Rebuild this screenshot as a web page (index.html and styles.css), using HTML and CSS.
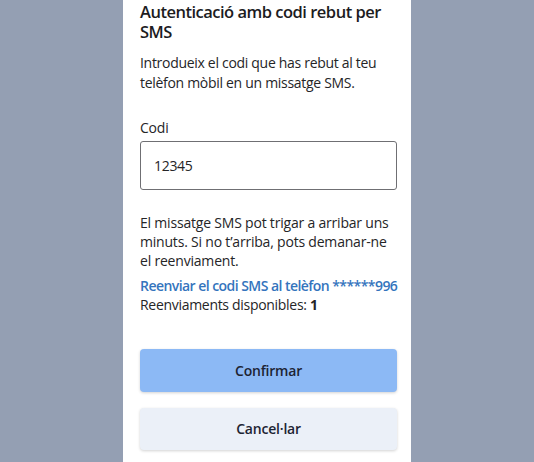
FILE: index.html
```html
<!DOCTYPE html>
<html lang="en">
<head>
<meta charset="utf-8">
<link rel="stylesheet" href="styles.css">
</head>
<body>
<div class="card">
  <h1 class="title">Autenticació amb codi rebut per SMS</h1>
  <p class="intro">Introdueix el codi que has rebut al teu telèfon mòbil en un missatge SMS.</p>
  <label class="label" for="codi">Codi</label>
  <div class="input" id="codi">12345</div>
  <p class="info">El missatge SMS pot trigar a arribar uns minuts. Si no t’arriba, pots demanar-ne el reenviament.</p>
  <a class="link">Reenviar el codi SMS al telèfon ******996</a>
  <p class="count">Reenviaments disponibles: <b>1</b></p>
  <div class="buttons">
    <div class="btn primary">Confirmar</div>
    <div class="btn secondary">Cancel·lar</div>
  </div>
</div>
</body>
</html>
```
FILE: styles.css
```css
html, body {
  margin: 0;
  padding: 0;
  height: 100%;
  overflow: hidden;
}
body {
  background: #949fb3;
  font-family: "Open Sans", "DejaVu Sans", sans-serif;
  color: #1d1d1f;
  font-variant-ligatures: no-common-ligatures;
}
.card {
  box-sizing: border-box;
  width: 288px;
  height: 462px;
  margin-left: 123px;
  background: #ffffff;
  padding: 2px 14px 0 17px;
  display: flex;
  flex-direction: column;
}
.card > * {
  flex-shrink: 0;
}
.title {
  margin: 0;
  font-size: 16.5px;
  font-weight: 600;
  line-height: 20px;
  letter-spacing: -0.5px;
  color: #1c1c1e;
}
.intro {
  margin: 11px 0 0;
  font-size: 14px;
  line-height: 19.5px;
  letter-spacing: -0.3px;
  color: #252527;
}
.label {
  margin-top: 26px;
  font-size: 14px;
  line-height: 20px;
  letter-spacing: -0.2px;
  color: #252527;
}
.input {
  margin-top: 3px;
  box-sizing: border-box;
  height: 49px;
  border: 1px solid #6f6f73;
  border-radius: 3px;
  padding: 0 13px;
  display: flex;
  align-items: center;
  font-size: 14px;
  letter-spacing: -0.3px;
  color: #252527;
}
.info {
  margin: 23px 0 0;
  font-size: 14px;
  line-height: 19.2px;
  letter-spacing: -0.2px;
  color: #252527;
}
.link {
  margin-top: 5px;
  font-size: 14px;
  line-height: 19px;
  font-weight: 600;
  letter-spacing: -0.55px;
  white-space: nowrap;
  color: #3474bd;
}
.count {
  margin: 0;
  font-size: 14px;
  line-height: 19px;
  letter-spacing: -0.3px;
  color: #252527;
}
.count b {
  font-weight: 700;
}
.buttons {
  margin-top: 35px;
  display: flex;
  flex-direction: column;
  gap: 16px;
}
.btn {
  height: 43px;
  border-radius: 4px;
  display: flex;
  align-items: center;
  justify-content: center;
  font-size: 14px;
  font-weight: 600;
  letter-spacing: -0.2px;
  color: #1d2433;
  box-shadow: 0 1px 3px rgba(0, 0, 0, 0.18);
}
.primary {
  background: #8cb9f5;
}
.secondary {
  height: 42px;
  background: #ebf0f8;
}
```
